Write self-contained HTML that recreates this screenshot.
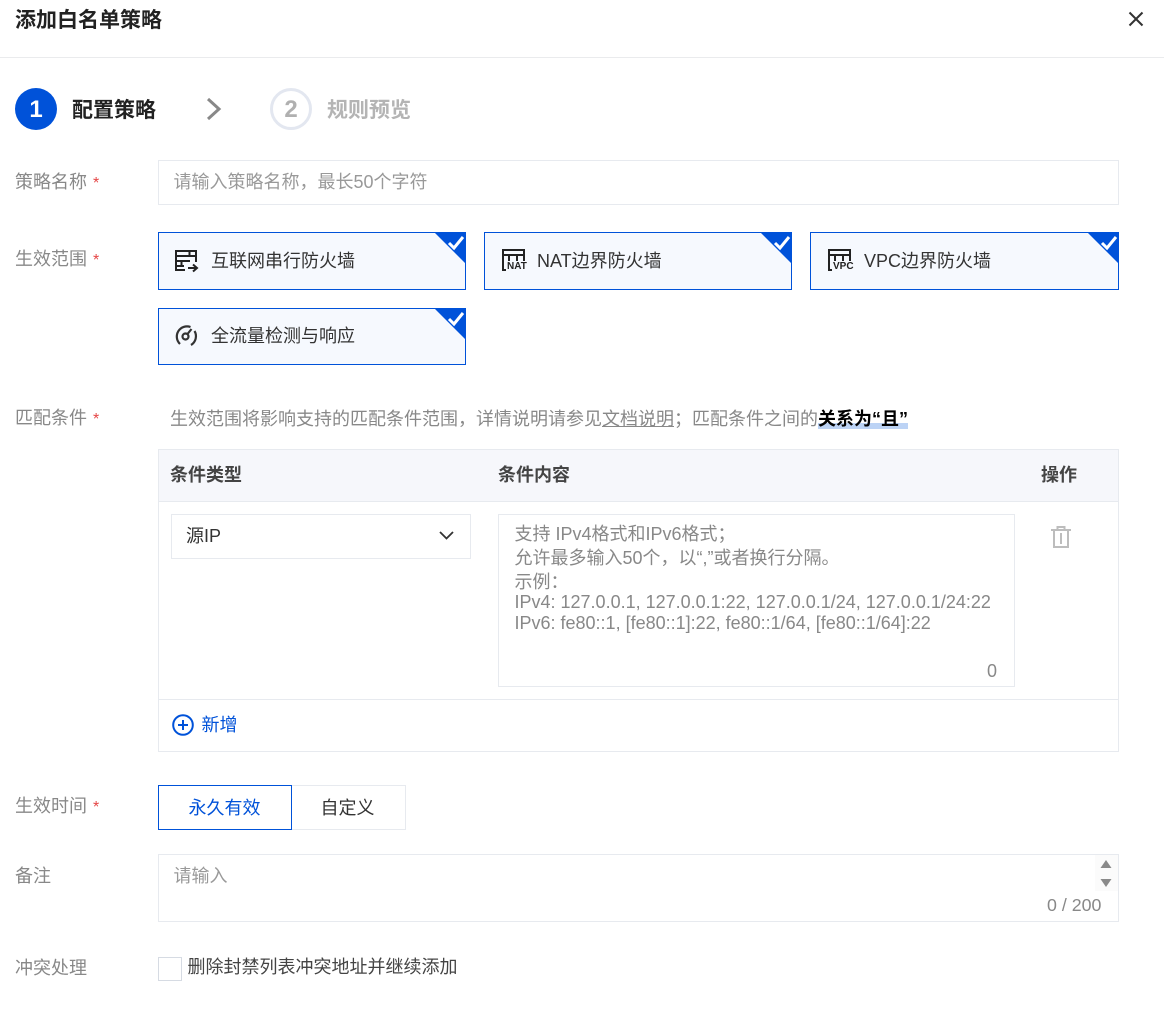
<!DOCTYPE html>
<html lang="zh"><head><meta charset="utf-8"><style>
html,body{margin:0;padding:0;background:#fff}
body{width:1164px;height:1026px;position:relative;overflow:hidden;font-family:"Liberation Sans","Noto Sans CJK SC",sans-serif;font-size:18px;color:#333}
.a{position:absolute;white-space:nowrap}
.t{line-height:26px;height:26px}
.lb{color:#888;left:15px}
.lb i{font-style:normal;color:#e54545;font-size:16px;margin-left:6px}
.box{position:absolute;box-sizing:border-box;border:1px solid #e7eaef;background:#fff}
.card{position:absolute;box-sizing:border-box;border:1px solid #0052d9;background:#f6f9fe;width:308px;height:58px;overflow:hidden}
.card svg.c{position:absolute;right:-1px;top:-1px}
.card span{position:absolute;left:52px;top:15px;line-height:26px;color:#333;white-space:nowrap}
.card svg.i{position:absolute;left:17px;top:16px}
.ph{color:#888}
</style></head><body>
<div class="a t" style="left:15px;top:8px;font-size:21px;font-weight:700;color:#222">添加白名单策略</div>
<svg class="a" style="left:1128px;top:11px" width="16" height="16" viewBox="0 0 16 16"><path d="M1.500 1.500L14.500 14.500M14.500 1.500L1.500 14.500" stroke="#333" stroke-width="2" fill="none"/></svg>
<div class="a" style="left:0;top:57px;width:1164px;height:1px;background:#eaebed"></div>

<svg class="a" style="left:15px;top:88px" width="42" height="42"><circle cx="21" cy="21" r="21" fill="#0052d9"/></svg>
<div class="a" style="left:15px;top:93px;width:42px;text-align:center;color:#fff;font-size:24px;font-weight:700;line-height:34px">1</div>
<div class="a t" style="left:72px;top:98px;font-size:21px;font-weight:700;color:#222">配置策略</div>
<svg class="a" style="left:205px;top:97px" width="18" height="24"><path d="M3 2L14 12L3 22" stroke="#888" stroke-width="3" fill="none"/></svg>
<svg class="a" style="left:270px;top:88px" width="42" height="42"><circle cx="21" cy="21" r="19.500" fill="none" stroke="#e3e7f0" stroke-width="3"/></svg>
<div class="a" style="left:270px;top:93px;width:42px;text-align:center;color:#b0b0b0;font-size:24px;font-weight:700;line-height:34px">2</div>
<div class="a t" style="left:327px;top:98px;font-size:21px;font-weight:700;color:#b4b4b4">规则预览</div>

<div class="a t lb" style="top:169px">策略名称<i>*</i></div>
<div class="box" style="left:158px;top:160px;width:961px;height:45px"></div>
<div class="a t" style="left:173.500px;top:169px;color:#999">请输入策略名称，最长50个字符</div>

<div class="a t lb" style="top:246px">生效范围<i>*</i></div>
<div class="card" style="left:158px;top:232px"><svg class="i" style="left:15px;top:16px" width="26" height="24" viewBox="0 0 26 24" fill="none" stroke="#222" stroke-width="2"><path d="M22 13V2H2V21H11M2 7H22M2 12H16M2 17H10M7.500 12V17M15.500 2V7"/><path d="M14 19H23M19 15.500L23 19L19 22.500"/></svg><span>互联网串行防火墙</span><svg class="c" width="32" height="32"><path d="M0 0H32V32Z" fill="#0052d9"/><path d="M15 11L20 16L29 5" stroke="#fff" stroke-width="3" fill="none"/></svg></div>
<div class="card" style="left:484px;top:232px"><svg class="i" width="24" height="24" viewBox="0 0 24 24" fill="none" stroke="#222" stroke-width="2"><path d="M4 21H1V1H22V12M1 6H22M7 6V12M15 6V12"/></svg><b class="a" style="left:22px;top:29px;font-size:10px;line-height:10px;color:#222">NAT</b><span>NAT边界防火墙</span><svg class="c" width="32" height="32"><path d="M0 0H32V32Z" fill="#0052d9"/><path d="M15 11L20 16L29 5" stroke="#fff" stroke-width="3" fill="none"/></svg></div>
<div class="card" style="left:810px;top:232px;width:309px"><svg class="i" width="24" height="24" viewBox="0 0 24 24" fill="none" stroke="#222" stroke-width="2"><path d="M4 21H1V1H22V12M1 6H22M7 6V12M15 6V12"/></svg><b class="a" style="left:22px;top:29px;font-size:10px;line-height:10px;color:#222">VPC</b><span style="left:53px">VPC边界防火墙</span><svg class="c" width="32" height="32"><path d="M0 0H32V32Z" fill="#0052d9"/><path d="M15 11L20 16L29 5" stroke="#fff" stroke-width="3" fill="none"/></svg></div>
<div class="card" style="left:158px;top:308px;height:57px"><svg class="i" style="left:15px;top:15px" width="24" height="24" viewBox="0 0 24 24" fill="none" stroke="#333" stroke-width="2.200"><path d="M6 20A10.200 10.200 0 0 1 16.500 3M20.500 7A10.200 10.200 0 0 1 17 21"/><circle cx="11.500" cy="12.500" r="3"/><path d="M13.500 10L17.500 5"/></svg><span style="top:14px">全流量检测与响应</span><svg class="c" width="32" height="32"><path d="M0 0H32V32Z" fill="#0052d9"/><path d="M15 11L20 16L29 5" stroke="#fff" stroke-width="3" fill="none"/></svg></div>

<div class="a t lb" style="top:405px">匹配条件<i>*</i></div>
<div class="a" style="left:818px;top:423px;width:90px;height:6px;background:#bcd3f5"></div>
<div class="a t" style="left:170px;top:406px;color:#888">生效范围将影响支持的匹配条件范围，详情说明请参见<span style="text-decoration:underline">文档说明</span>；匹配条件之间的<b style="color:#000">关系为“且”</b></div>

<div class="box" style="left:158px;top:449px;width:961px;height:303px"></div>
<div class="a" style="left:159px;top:450px;width:959px;height:51px;background:#f6f7fb;border-bottom:1px solid #e7eaef"></div>
<div class="a t" style="left:170px;top:462px;font-weight:700;color:#444">条件类型</div>
<div class="a t" style="left:498px;top:462px;font-weight:700;color:#444">条件内容</div>
<div class="a t" style="left:1041px;top:462px;font-weight:700;color:#444">操作</div>
<div class="box" style="left:171px;top:514px;width:300px;height:45px"></div>
<div class="a t" style="left:186px;top:523px">源IP</div>
<svg class="a" style="left:439px;top:530px" width="15" height="12"><path d="M1 2L7.500 8.500L14 2" stroke="#333" stroke-width="1.800" fill="none"/></svg>
<div class="box" style="left:498px;top:514px;width:517px;height:173px"></div>
<div class="a t ph" style="left:514.500px;top:521px">支持 IPv4格式和IPv6格式；</div>
<div class="a t ph" style="left:514.500px;top:545px">允许最多输入50个，以“,”或者换行分隔。</div>
<div class="a t ph" style="left:514.500px;top:569px">示例：</div>
<div class="a t ph" style="left:514.500px;top:589px">IPv4: 127.0.0.1, 127.0.0.1:22, 127.0.0.1/24, 127.0.0.1/24:22</div>
<div class="a t ph" style="left:514.500px;top:610px">IPv6: fe80::1, [fe80::1]:22, fe80::1/64, [fe80::1/64]:22</div>
<div class="a t" style="left:987px;top:658px;color:#888">0</div>
<svg class="a" style="left:1051px;top:525px" width="21" height="24" fill="none" stroke="#bdbdbd" stroke-width="2"><path d="M0 5H20M6.500 5V2H13.500V5M3 5V22H17V5M10 8V19"/></svg>
<div class="a" style="left:159px;top:699px;width:959px;height:1px;background:#e7eaef"></div>
<svg class="a" style="left:172px;top:714px" width="22" height="22" fill="none" stroke="#0052d9" stroke-width="2"><circle cx="11" cy="11" r="9.800"/><path d="M6 11H16M11 6V16"/></svg>
<div class="a t" style="left:201.500px;top:712px;color:#0052d9">新增</div>

<div class="a t lb" style="top:793px">生效时间<i>*</i></div>
<div class="box" style="left:291px;top:785px;width:115px;height:45px"></div>
<div class="box" style="left:158px;top:785px;width:134px;height:45px;border-color:#0052d9"></div>
<div class="a t" style="left:157.500px;top:795px;width:134px;text-align:center;color:#0052d9">永久有效</div>
<div class="a t" style="left:290px;top:795px;width:115px;text-align:center;color:#333">自定义</div>

<div class="a t lb" style="top:863px">备注</div>
<div class="box" style="left:158px;top:854px;width:961px;height:68px"></div>
<div class="a t" style="left:173.500px;top:863px;color:#999">请输入</div>
<div class="a" style="left:1095px;top:855px;width:23px;height:36px;background:#fbfbfb"></div>
<svg class="a" style="left:1100px;top:860px" width="12" height="28" fill="#8a8a8a"><path d="M6 0L11.500 8H0.500ZM0.500 19H11.500L6 27Z"/></svg>
<div class="a t" style="left:1047px;top:892px;color:#888;font-size:17.800px">0 / 200</div>

<div class="a t lb" style="top:955px">冲突处理</div>
<div class="box" style="left:158px;top:957px;width:24px;height:24px;border-color:#d6dbe3"></div>
<div class="a t" style="left:187.500px;top:954px;color:#444">删除封禁列表冲突地址并继续添加</div>
</body></html>
